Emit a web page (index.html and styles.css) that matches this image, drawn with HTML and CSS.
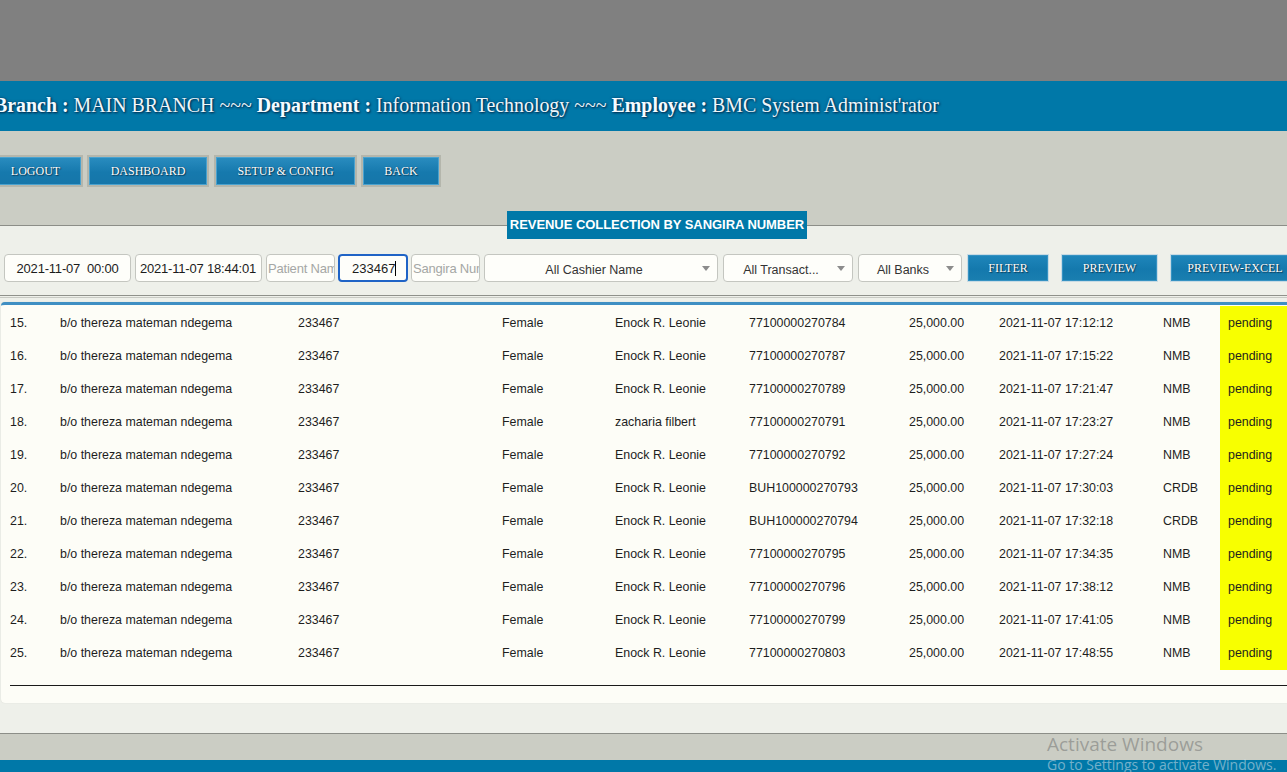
FILE: index.html
```html
<!DOCTYPE html>
<html>
<head>
<meta charset="utf-8">
<link rel="stylesheet" href="styles.css">
</head>
<body>
<div class="topgrey"></div>
<header class="infobar">
  <div class="infotext"><b>Branch :</b> MAIN BRANCH ~~~ <b>Department :</b> Information Technology ~~~ <b>Employee :</b> BMC System Administ'rator</div>
</header>
<nav class="toolbar">
  <span class="navbtn w-logout">LOGOUT</span>
  <span class="navbtn w-dash">DASHBOARD</span>
  <span class="navbtn w-setup">SETUP &amp; CONFIG</span>
  <span class="navbtn w-back">BACK</span>
</nav>
<main class="section">
  <div class="titlewrap"><span class="title">REVENUE COLLECTION BY SANGIRA NUMBER</span></div>
  <div class="filters">
    <div class="field f-date1 center">2021-11-07&nbsp;&nbsp;00:00</div>
    <div class="field f-date2">2021-11-07 18:44:01</div>
    <div class="field f-small ph">Patient Name</div>
    <div class="field f-small focus"><span class="caret">233467</span></div>
    <div class="field f-small ph">Sangira Number</div>
    <div class="field sel f-cashier"><span>All Cashier Name</span><i class="arrow"></i></div>
    <div class="field sel f-trans"><span>All Transact...</span><i class="arrow"></i></div>
    <div class="field sel f-banks"><span>All Banks</span><i class="arrow"></i></div>
    <span class="actbtn a-filter">FILTER</span>
    <span class="actbtn a-preview">PREVIEW</span>
    <span class="actbtn a-excel">PREVIEW-EXCEL</span>
  </div>
  <div class="rule"></div>
  <div class="panel">
    <table class="grid">
      <colgroup>
        <col class="c1"><col class="c2"><col class="c3"><col class="c4"><col class="c5"><col class="c6"><col class="c7"><col class="c8"><col class="c9"><col class="c10">
      </colgroup>
      <tbody>
        <tr><td>15.</td><td>b/o thereza mateman ndegema</td><td>233467</td><td>Female</td><td>Enock R. Leonie</td><td>77100000270784</td><td>25,000.00</td><td>2021-11-07 17:12:12</td><td>NMB</td><td class="st">pending</td></tr>
        <tr><td>16.</td><td>b/o thereza mateman ndegema</td><td>233467</td><td>Female</td><td>Enock R. Leonie</td><td>77100000270787</td><td>25,000.00</td><td>2021-11-07 17:15:22</td><td>NMB</td><td class="st">pending</td></tr>
        <tr><td>17.</td><td>b/o thereza mateman ndegema</td><td>233467</td><td>Female</td><td>Enock R. Leonie</td><td>77100000270789</td><td>25,000.00</td><td>2021-11-07 17:21:47</td><td>NMB</td><td class="st">pending</td></tr>
        <tr><td>18.</td><td>b/o thereza mateman ndegema</td><td>233467</td><td>Female</td><td>zacharia filbert</td><td>77100000270791</td><td>25,000.00</td><td>2021-11-07 17:23:27</td><td>NMB</td><td class="st">pending</td></tr>
        <tr><td>19.</td><td>b/o thereza mateman ndegema</td><td>233467</td><td>Female</td><td>Enock R. Leonie</td><td>77100000270792</td><td>25,000.00</td><td>2021-11-07 17:27:24</td><td>NMB</td><td class="st">pending</td></tr>
        <tr><td>20.</td><td>b/o thereza mateman ndegema</td><td>233467</td><td>Female</td><td>Enock R. Leonie</td><td>BUH100000270793</td><td>25,000.00</td><td>2021-11-07 17:30:03</td><td>CRDB</td><td class="st">pending</td></tr>
        <tr><td>21.</td><td>b/o thereza mateman ndegema</td><td>233467</td><td>Female</td><td>Enock R. Leonie</td><td>BUH100000270794</td><td>25,000.00</td><td>2021-11-07 17:32:18</td><td>CRDB</td><td class="st">pending</td></tr>
        <tr><td>22.</td><td>b/o thereza mateman ndegema</td><td>233467</td><td>Female</td><td>Enock R. Leonie</td><td>77100000270795</td><td>25,000.00</td><td>2021-11-07 17:34:35</td><td>NMB</td><td class="st">pending</td></tr>
        <tr><td>23.</td><td>b/o thereza mateman ndegema</td><td>233467</td><td>Female</td><td>Enock R. Leonie</td><td>77100000270796</td><td>25,000.00</td><td>2021-11-07 17:38:12</td><td>NMB</td><td class="st">pending</td></tr>
        <tr><td>24.</td><td>b/o thereza mateman ndegema</td><td>233467</td><td>Female</td><td>Enock R. Leonie</td><td>77100000270799</td><td>25,000.00</td><td>2021-11-07 17:41:05</td><td>NMB</td><td class="st">pending</td></tr>
        <tr><td>25.</td><td>b/o thereza mateman ndegema</td><td>233467</td><td>Female</td><td>Enock R. Leonie</td><td>77100000270803</td><td>25,000.00</td><td>2021-11-07 17:48:55</td><td>NMB</td><td class="st">pending</td></tr>
      </tbody>
    </table>
    <div class="endline"></div>
  </div>
</main>
<div class="footgrey"></div>
<footer class="footblue"></footer>
<div class="watermark">
  <div class="wm1">Activate Windows</div>
  <div class="wm2">Go to Settings to activate Windows.</div>
</div>
</body>
</html>
```

FILE: styles.css
```css
html, body {
  margin: 0;
  padding: 0;
  width: 1287px;
  height: 772px;
  overflow: hidden;
  background: #cbcdc4;
}
body { position: relative; }

.topgrey { height: 81px; background: #808080; }

.infobar {
  height: 50px;
  background: #0078a8;
  display: flex;
  align-items: center;
  overflow: hidden;
}
.infotext {
  margin-left: -6px;
  margin-top: -2px;
  white-space: nowrap;
  font-family: "Liberation Serif", serif;
  font-size: 19.9px;
  color: #eef6fa;
  text-shadow: 0 0 3px #003d66, 1px 1px 2px #002a4a;
}
.infotext b { color: #f4fbff; }

.toolbar {
  height: 95px;
  box-sizing: border-box;
  padding-top: 24px;
  display: flex;
  gap: 4px;
  align-items: flex-start;
  border-bottom: 1px solid #8c8e88;
  overflow: hidden;
}
.navbtn {
  flex-shrink: 0;
  height: 32px;
  box-sizing: border-box;
  border: 2px solid #b4b6ac;
  background: linear-gradient(#2a8dc0, #1679ad 55%, #1676a9);
  box-shadow: inset 0 0 0 1px #4aa2cf;
  display: flex;
  align-items: center;
  justify-content: center;
  font-family: "Liberation Serif", serif;
  font-size: 12px;
  color: #ffffff;
  text-shadow: 1px 1px 1px #0b3e5c, 0 0 1px #0b3e5c;
}
.w-logout { width: 95px; margin-left: -12px; }
.w-dash { width: 122px; }
.w-setup { width: 143px; margin-left: 1px; }
.w-back { width: 80px; }

.section {
  display: flow-root;
  height: 507px;
  background: #eef0ea;
  border-bottom: 1px solid #8c8e88;
}
.titlewrap { height: 28px; margin-top: -15px; padding-left: 507px; }
.title {
  display: inline-block;
  width: 300px;
  height: 28px;
  line-height: 28px;
  text-align: center;
  background: #0078a8;
  color: #ffffff;
  font-family: "Liberation Sans", Arial, sans-serif;
  font-weight: bold;
  font-size: 13px;
  letter-spacing: -0.05px;
}

.filters {
  margin-top: 15px;
  padding-left: 4px;
  display: flex;
  align-items: center;
  height: 28px;
  overflow: hidden;
}
.field {
  flex-shrink: 0;
  height: 28px;
  box-sizing: border-box;
  border: 1px solid #c4c6c0;
  border-radius: 4px;
  background: #fefefa;
  font-family: "Liberation Sans", Arial, sans-serif;
  font-size: 13px;
  letter-spacing: -0.2px;
  color: #1c1c1c;
  display: flex;
  align-items: center;
  padding-left: 5px;
  margin-right: 4px;
  overflow: hidden;
  white-space: nowrap;
}
.center { justify-content: center; padding-left: 0; }
.f-date1 { width: 127px; }
.f-date2 { width: 127px; padding-left: 4px; }
.f-small { width: 69px; padding-left: 1px; }
.ph { color: #a5a7a5; }
.focus {
  width: 70px;
  border: 2px solid #1f63c6;
  padding-left: 12px;
  margin-left: -1px;
  margin-right: 3px;
  letter-spacing: 0;
}
.caret { border-right: 1px solid #000; padding-right: 0; }
.sel {
  justify-content: center;
  position: relative;
  font-size: 12.5px;
  letter-spacing: 0;
  color: #333;
  padding-left: 0;
  padding-right: 14px;
}
.sel span { margin-top: 4px; }
.arrow {
  position: absolute;
  right: 7px;
  top: 11px;
  width: 0;
  height: 0;
  border-left: 4px solid transparent;
  border-right: 4px solid transparent;
  border-top: 5px solid #8c8c8c;
}
.f-cashier { width: 234px; margin-right: 5px; }
.f-trans { width: 130px; margin-right: 5px; }
.f-banks { width: 104px; margin-right: 5px; }

.actbtn {
  flex-shrink: 0;
  height: 28px;
  box-sizing: border-box;
  border: 1px solid #c8dbe4;
  background: linear-gradient(#1f86bb, #1479ad 55%, #1a7fb0);
  box-shadow: inset 0 0 0 1px #3592c2;
  display: flex;
  align-items: center;
  justify-content: center;
  font-family: "Liberation Serif", serif;
  font-size: 12px;
  color: #ffffff;
  text-shadow: 1px 1px 1px #0b3e5c, 0 0 1px #0b3e5c;
}
.a-filter { width: 82px; margin-right: 12px; }
.a-preview { width: 97px; margin-right: 12px; }
.a-excel { width: 130px; }

.rule {
  margin-top: 13px;
  height: 1px;
  border-top: 1px solid #8f918b;
  border-bottom: 1px solid #c8cac4;
}

.panel {
  margin-top: 4px;
  margin-left: 1px;
  height: 401px;
  box-sizing: border-box;
  background: #fdfdf7;
  border-top: 3px solid #3f8fc3;
  border-radius: 4px 0 0 4px;
  box-shadow: 0 0 1px #c9ccc4;
  padding-left: 1px;
  padding-top: 1px;
}
.grid {
  border-collapse: collapse;
  table-layout: fixed;
  width: 1285px;
  font-family: "Liberation Sans", Arial, sans-serif;
  font-size: 12.4px;
  color: #1e1e1e;
}
.grid td {
  height: 33.1px;
  padding: 0 0 0 8px;
  white-space: nowrap;
  overflow: hidden;
  vertical-align: middle;
}
.c1 { width: 50px; }
.c2 { width: 238px; }
.c3 { width: 204px; }
.c4 { width: 113px; }
.c5 { width: 134px; }
.c6 { width: 160px; }
.c7 { width: 90px; }
.c8 { width: 164px; }
.c9 { width: 65px; }
.c10 { width: 67px; }
.grid td.st { background: #f8ff00; }

.endline {
  margin-top: 15px;
  margin-left: 8px;
  height: 0;
  border-top: 1px solid #1a1a1a;
}

.footgrey { height: 26px; background: #cbcdc4; }
.footblue { height: 12px; background: #0078a8; }

.watermark {
  position: absolute;
  left: 1047px;
  top: 732px;
  font-family: "Open Sans", "Noto Sans", sans-serif;
  white-space: nowrap;
}
.wm1 { font-size: 19px; color: rgba(140, 142, 138, 0.75); line-height: 25px; }
.wm2 { font-size: 14px; color: rgba(215, 225, 232, 0.55); line-height: 16px; }
```
